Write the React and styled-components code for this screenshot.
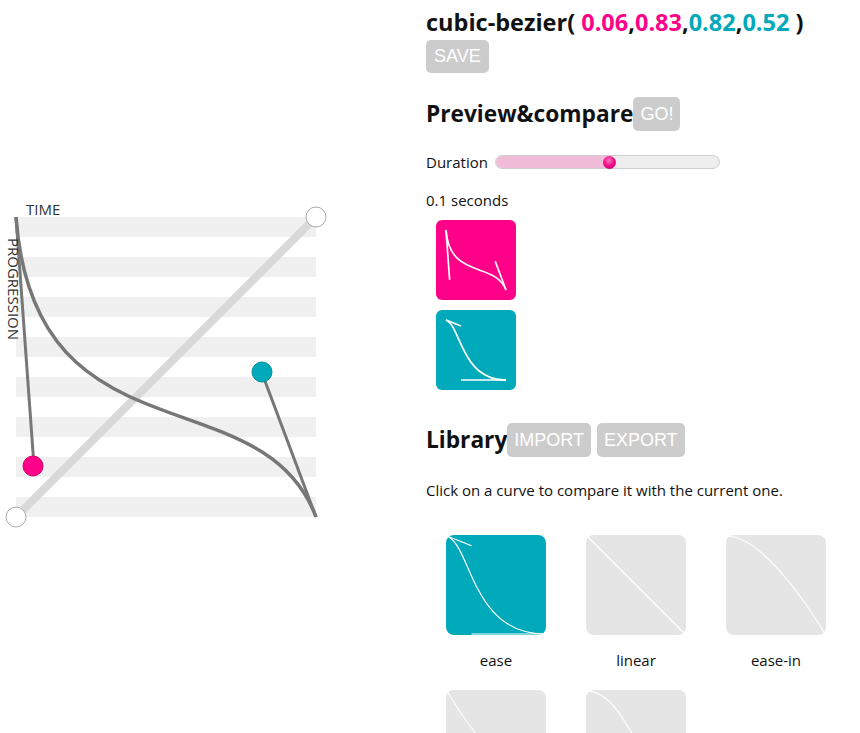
import styled, { createGlobalStyle } from "styled-components";

const PINK = "#ff0088";
const CYAN = "#00aabb";
const current = [0.06, 0.83, 0.82, 0.52];

const library = [
    { name: "ease", p: [0.25, 0.1, 0.25, 1], active: true },
    { name: "linear", p: [0, 0, 1, 1] },
    { name: "ease-in", p: [0.42, 0, 1, 1] },
    { name: "ease-out", p: [0, 0, 0.58, 1] },
    { name: "ease-in-out", p: [0.42, 0, 0.58, 1] },
];

const GlobalStyle = createGlobalStyle`
    html, body {
        margin: 0;
        padding: 0;
        background: #fff;
    }
    body {
        font-family: "Open Sans", "Noto Sans", sans-serif;
        color: #111;
        overflow: hidden;
    }
`;

// curve drawn with y going down, as the page shows it
const Curve = ({ p, size, pad, stroke, width, handles }) => {
    const s = size - pad * 2;
    const x = (v) => pad + v * s;
    const y = (v) => pad + v * s;
    const d = `M${x(0)},${y(0)} C${x(p[0])},${y(p[1])} ${x(p[2])},${y(p[3])} ${x(1)},${y(1)}`;
    return (
        <svg width={size} height={size} viewBox={`0 0 ${size} ${size}`}>
            {handles && (
                <g stroke={stroke} strokeWidth={width}>
                    <line x1={x(0)} y1={y(0)} x2={x(p[0])} y2={y(p[1])} />
                    <line x1={x(1)} y1={y(1)} x2={x(p[2])} y2={y(p[3])} />
                </g>
            )}
            <path d={d} fill="none" stroke={stroke} strokeWidth={width} />
        </svg>
    );
};

const Graph = () => {
    const ox = 16;
    const oy = 27;
    const s = 300;
    const px = (v) => ox + v * s;
    const py = (v) => oy + v * s;
    const [a, b, c, d] = current;
    return (
        <svg width="340" height="340" viewBox="0 0 340 340">
            {[0, 1, 2, 3, 4, 5, 6, 7].map((i) => (
                <rect key={i} x={ox} y={oy + i * 40} width={s} height={20} fill="#f0f0f0" />
            ))}
            <line x1={px(0)} y1={py(1)} x2={px(1)} y2={py(0)} stroke="#d9d9d9" strokeWidth="8" />
            <g stroke="#777" strokeWidth="3">
                <line x1={px(0)} y1={py(0)} x2={px(a)} y2={py(b)} />
                <line x1={px(1)} y1={py(1)} x2={px(c)} y2={py(d)} />
            </g>
            <path
                d={`M${px(0)},${py(0)} C${px(a)},${py(b)} ${px(c)},${py(d)} ${px(1)},${py(1)}`}
                fill="none"
                stroke="#777"
                strokeWidth="3.5"
            />
            <circle cx={px(0)} cy={py(1)} r="10" fill="#fff" stroke="#aaa" />
            <circle cx={px(1)} cy={py(0)} r="10" fill="#fff" stroke="#aaa" />
            <circle cx={px(a) - 1} cy={py(b)} r="10" fill={PINK} stroke="#d0006e" />
            <circle cx={px(c)} cy={py(d) - 1} r="10" fill={CYAN} stroke="#008f9e" />
        </svg>
    );
};

const App = () => {
    const duration = 0.1;
    const sliderPos = 51;
    return (
        <>
            <GlobalStyle />
            <Page>
                <Left>
                    <Plot>
                        <Graph />
                        <TimeLabel>TIME</TimeLabel>
                        <ProgressLabel>PROGRESSION</ProgressLabel>
                    </Plot>
                </Left>
                <Right>
                    <Title>
                        cubic-bezier( <Num $c={PINK}>{current[0].toFixed(2)}</Num>,
                        <Num $c={PINK}>{current[1].toFixed(2)}</Num>,
                        <Num $c={CYAN}>{current[2].toFixed(2)}</Num>,
                        <Num $c={CYAN}>{current[3].toFixed(2)}</Num> )
                    </Title>
                    <Button>SAVE</Button>

                    <Heading $top={24}>
                        Preview&amp;compare<Button>GO!</Button>
                    </Heading>

                    <DurationRow>
                        <span>Duration</span>
                        <Track>
                            <Fill style={{ width: `${sliderPos}%` }} />
                            <Thumb style={{ left: `${sliderPos}%` }} />
                        </Track>
                    </DurationRow>
                    <Text $top={18}>{duration} seconds</Text>

                    <Previews>
                        <PreviewBox $bg={PINK}>
                            <Curve p={current} size={80} pad={10} stroke="#fff" width={1.7} handles />
                        </PreviewBox>
                        <PreviewBox $bg={CYAN}>
                            <Curve p={library[0].p} size={80} pad={10} stroke="#fff" width={1.7} handles />
                        </PreviewBox>
                    </Previews>

                    <Heading $top={33}>
                        Library<Button>IMPORT</Button> <Button>EXPORT</Button>
                    </Heading>
                    <Text $top={23}>Click on a curve to compare it with the current one.</Text>

                    <Grid>
                        {library.map((item) => (
                            <Item key={item.name}>
                                <Thumbnail $active={item.active}>
                                    <Curve
                                        p={item.p}
                                        size={100}
                                        pad={1}
                                        stroke="#fff"
                                        width={1.2}
                                        handles={item.active}
                                    />
                                </Thumbnail>
                                <ItemName>{item.name}</ItemName>
                            </Item>
                        ))}
                    </Grid>
                </Right>
            </Page>
        </>
    );
};

export default App;

const Page = styled.div`
    display: flex;
    width: 860px;
    height: 733px;
    overflow: hidden;
`;

const Left = styled.div`
    width: 426px;
    flex-shrink: 0;
    padding-top: 190px;
`;

const Plot = styled.div`
    position: relative;
    width: 340px;
    height: 340px;
    svg {
        display: block;
    }
`;

const TimeLabel = styled.span`
    position: absolute;
    left: 26px;
    top: 9px;
    font-size: 15px;
    line-height: 20px;
    color: #333;
`;

const ProgressLabel = styled.span`
    position: absolute;
    left: 5px;
    top: 48px;
    font-size: 15px;
    line-height: 18px;
    color: #333;
    transform-origin: 0 0;
    transform: translateX(18px) rotate(90deg);
    white-space: nowrap;
`;

const Right = styled.div`
    flex: 1;
    padding-top: 7px;
`;

const Title = styled.h1`
    margin: 0;
    font-size: 23.5px;
    line-height: 30px;
    font-weight: 700;
`;

const Num = styled.span`
    color: ${(p) => p.$c};
`;

const Button = styled.button`
    font-family: "Liberation Sans", Arial, sans-serif;
    font-size: 18px;
    line-height: 21px;
    font-weight: 400;
    color: #fff;
    background: #cccccc;
    border: none;
    border-radius: 5px;
    padding: 6px 8px;
    margin: 3px 0 0;
    vertical-align: middle;
    cursor: pointer;
`;

const Heading = styled.h2`
    margin: ${(p) => p.$top}px 0 0;
    font-size: 22.7px;
    line-height: 34px;
    font-weight: 700;
    ${Button} {
        margin: 0;
        padding: 7px 7px 6px;
        vertical-align: top;
    }
`;

const DurationRow = styled.div`
    display: flex;
    align-items: center;
    gap: 7px;
    margin-top: 21px;
    font-size: 15px;
    line-height: 20px;
`;

const Track = styled.div`
    position: relative;
    width: 223px;
    height: 12px;
    border: 1px solid #cfcfcf;
    border-radius: 7px;
    background: #eeeeee;
`;

const Fill = styled.div`
    height: 100%;
    border-radius: 7px 0 0 7px;
    background: #f0bcd8;
`;

const Thumb = styled.div`
    position: absolute;
    top: 50%;
    width: 13px;
    height: 13px;
    margin: -6.5px 0 0 -6.5px;
    border-radius: 50%;
    background: radial-gradient(circle at 45% 35%, #ff7ac0 0%, #ee1188 45%, #c4006a 100%);
`;

const Text = styled.p`
    margin: ${(p) => p.$top}px 0 0;
    font-size: 15px;
    line-height: 20px;
`;

const Previews = styled.div`
    display: flex;
    flex-direction: column;
    gap: 10px;
    margin: 10px 0 0 10px;
`;

const PreviewBox = styled.div`
    width: 80px;
    height: 80px;
    border-radius: 6px;
    background: ${(p) => p.$bg};
    svg {
        display: block;
    }
`;

const Grid = styled.div`
    display: grid;
    grid-template-columns: repeat(3, 100px);
    column-gap: 40px;
    row-gap: 20px;
    margin: 35px 0 0 20px;
`;

const Item = styled.div`
    display: flex;
    flex-direction: column;
    align-items: center;
`;

const Thumbnail = styled.div`
    width: 100px;
    height: 100px;
    border-radius: 8px;
    overflow: hidden;
    background: ${(p) => (p.$active ? CYAN : "#e5e5e5")};
    svg {
        display: block;
    }
`;

const ItemName = styled.div`
    margin-top: 15px;
    font-size: 15px;
    line-height: 20px;
`;
